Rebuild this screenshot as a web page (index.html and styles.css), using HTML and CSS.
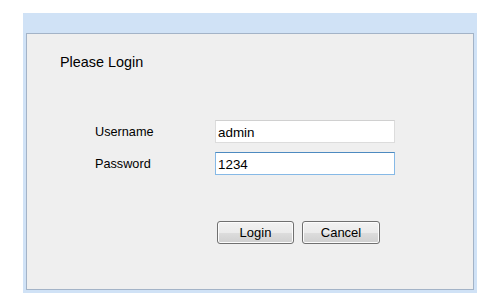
FILE: index.html
```html
<!DOCTYPE html>
<html>
<head>
<meta charset="utf-8">
<link rel="stylesheet" href="styles.css">
</head>
<body>
<div class="frame">
  <div class="panel">
    <div class="title">Please Login</div>
    <form class="form">
      <div class="fields">
        <label class="label" for="u">Username</label>
        <input class="input" id="u" type="text" value="admin">
        <label class="label" for="p">Password</label>
        <input class="input focused" id="p" type="text" value="1234">
      </div>
      <div class="actions">
        <button type="button" class="btn">Login</button>
        <button type="button" class="btn btn-wide">Cancel</button>
      </div>
    </form>
  </div>
</div>
</body>
</html>
```

FILE: styles.css
```css
html, body {
  margin: 0;
  padding: 0;
  background: #ffffff;
}
body {
  font-family: "Liberation Sans", Arial, sans-serif;
  color: #000;
}
.frame {
  box-sizing: border-box;
  margin: 13px 0 0 23px;
  width: 454px;
  height: 280px;
  padding: 20px 3px 3px 3px;
  background: #d0e2f6;
}
.panel {
  box-sizing: border-box;
  height: 257px;
  border: 1px solid #a3b3c7;
  background: #efefef;
  padding: 20px 0 0 33px;
}
.title {
  font-size: 14.4px;
  line-height: 16px;
}
.form {
  margin: 0 0 0 35px;
}
.fields {
  display: grid;
  grid-template-columns: 120px 180px;
  row-gap: 9px;
  align-items: center;
  margin-top: 50px;
}
.label {
  font-size: 12.7px;
  line-height: 15px;
  padding-top: 1px;
}
.input {
  box-sizing: border-box;
  width: 180px;
  height: 23px;
  margin: 0;
  padding: 1px 2px 0 2px;
  border: 1px solid #dcdcdc;
  border-top-color: #d0d0d0;
  background: #fff;
  font-family: "Liberation Sans", Arial, sans-serif;
  font-size: 13.4px;
  color: #000;
  outline: none;
}
.input.focused {
  border-color: #86b9e6;
  border-top-color: #4d8ac0;
}
.actions {
  display: flex;
  gap: 8px;
  margin: 46px 0 0 122px;
}
.btn {
  box-sizing: border-box;
  width: 77px;
  height: 23px;
  margin: 0;
  padding: 0;
  border: 1px solid #707070;
  border-radius: 3px;
  background: linear-gradient(#f2f2f2 0%, #ebebeb 50%, #dddddd 51%, #cfcfcf 100%);
  box-shadow: inset 0 0 0 1px #fcfcfc;
  font-family: "Liberation Sans", Arial, sans-serif;
  font-size: 13px;
  color: #000;
}
.btn-wide {
  width: 78px;
}
```
